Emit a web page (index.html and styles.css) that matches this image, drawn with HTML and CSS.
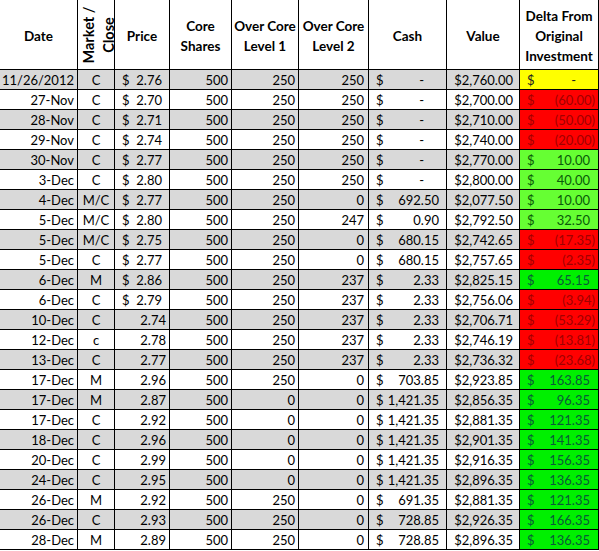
FILE: index.html
```html
<!DOCTYPE html>
<html lang="en">
<head>
<meta charset="utf-8">
<title>Investment tracker</title>
<link rel="stylesheet" href="styles.css">
</head>
<body>
<table class="sheet">
  <colgroup>
    <col class="c-date"><col class="c-mkt"><col class="c-price"><col class="c-core"><col class="c-l1"><col class="c-l2"><col class="c-cash"><col class="c-value"><col class="c-delta">
  </colgroup>
  <thead>
    <tr>
      <th><div class="hd">Date</div></th>
      <th><div class="hd hd-vert"><div class="vert">Market /<br>Close</div></div></th>
      <th><div class="hd">Price</div></th>
      <th><div class="hd">Core<br>Shares</div></th>
      <th><div class="hd">Over Core<br>Level 1</div></th>
      <th><div class="hd">Over Core<br>Level 2</div></th>
      <th><div class="hd">Cash</div></th>
      <th><div class="hd">Value</div></th>
      <th><div class="hd">Delta From<br>Original<br>Investment</div></th>
    </tr>
  </thead>
  <tbody>
    <tr class="alt"><td class="num">11/26/2012</td><td class="ctr">C</td><td class="acc"><span class="cur">$</span>2.76</td><td class="num">500</td><td class="num">250</td><td class="num l2">250</td><td class="acc"><span class="cur">$</span><span class="dash">-</span></td><td class="num val">$2,760.00</td><td class="acc yel"><span class="cur">$</span><span class="dash">-</span></td></tr>
    <tr><td class="num">27-Nov</td><td class="ctr">C</td><td class="acc"><span class="cur">$</span>2.70</td><td class="num">500</td><td class="num">250</td><td class="num l2">250</td><td class="acc"><span class="cur">$</span><span class="dash">-</span></td><td class="num val">$2,700.00</td><td class="acc red"><span class="cur">$</span>(60.00)</td></tr>
    <tr class="alt"><td class="num">28-Nov</td><td class="ctr">C</td><td class="acc"><span class="cur">$</span>2.71</td><td class="num">500</td><td class="num">250</td><td class="num l2">250</td><td class="acc"><span class="cur">$</span><span class="dash">-</span></td><td class="num val">$2,710.00</td><td class="acc red"><span class="cur">$</span>(50.00)</td></tr>
    <tr><td class="num">29-Nov</td><td class="ctr">C</td><td class="acc"><span class="cur">$</span>2.74</td><td class="num">500</td><td class="num">250</td><td class="num l2">250</td><td class="acc"><span class="cur">$</span><span class="dash">-</span></td><td class="num val">$2,740.00</td><td class="acc red"><span class="cur">$</span>(20.00)</td></tr>
    <tr class="alt"><td class="num">30-Nov</td><td class="ctr">C</td><td class="acc"><span class="cur">$</span>2.77</td><td class="num">500</td><td class="num">250</td><td class="num l2">250</td><td class="acc"><span class="cur">$</span><span class="dash">-</span></td><td class="num val">$2,770.00</td><td class="acc grn"><span class="cur">$</span>10.00</td></tr>
    <tr><td class="num">3-Dec</td><td class="ctr">C</td><td class="acc"><span class="cur">$</span>2.80</td><td class="num">500</td><td class="num">250</td><td class="num l2">250</td><td class="acc"><span class="cur">$</span><span class="dash">-</span></td><td class="num val">$2,800.00</td><td class="acc grn"><span class="cur">$</span>40.00</td></tr>
    <tr class="alt"><td class="num">4-Dec</td><td class="ctr">M/C</td><td class="acc"><span class="cur">$</span>2.77</td><td class="num">500</td><td class="num">250</td><td class="num l2">0</td><td class="acc"><span class="cur">$</span>692.50</td><td class="num val">$2,077.50</td><td class="acc grn"><span class="cur">$</span>10.00</td></tr>
    <tr><td class="num">5-Dec</td><td class="ctr">M/C</td><td class="acc"><span class="cur">$</span>2.80</td><td class="num">500</td><td class="num">250</td><td class="num l2">247</td><td class="acc"><span class="cur">$</span>0.90</td><td class="num val">$2,792.50</td><td class="acc grn"><span class="cur">$</span>32.50</td></tr>
    <tr class="alt"><td class="num">5-Dec</td><td class="ctr">M/C</td><td class="acc"><span class="cur">$</span>2.75</td><td class="num">500</td><td class="num">250</td><td class="num l2">0</td><td class="acc"><span class="cur">$</span>680.15</td><td class="num val">$2,742.65</td><td class="acc red"><span class="cur">$</span>(17.35)</td></tr>
    <tr><td class="num">5-Dec</td><td class="ctr">C</td><td class="acc"><span class="cur">$</span>2.77</td><td class="num">500</td><td class="num">250</td><td class="num l2">0</td><td class="acc"><span class="cur">$</span>680.15</td><td class="num val">$2,757.65</td><td class="acc red"><span class="cur">$</span>(2.35)</td></tr>
    <tr class="alt"><td class="num">6-Dec</td><td class="ctr">M</td><td class="acc"><span class="cur">$</span>2.86</td><td class="num">500</td><td class="num">250</td><td class="num l2">237</td><td class="acc"><span class="cur">$</span>2.33</td><td class="num val">$2,825.15</td><td class="acc grn2"><span class="cur">$</span>65.15</td></tr>
    <tr><td class="num">6-Dec</td><td class="ctr">C</td><td class="acc"><span class="cur">$</span>2.79</td><td class="num">500</td><td class="num">250</td><td class="num l2">237</td><td class="acc"><span class="cur">$</span>2.33</td><td class="num val">$2,756.06</td><td class="acc red"><span class="cur">$</span>(3.94)</td></tr>
    <tr class="alt"><td class="num">10-Dec</td><td class="ctr">C</td><td class="num">2.74</td><td class="num">500</td><td class="num">250</td><td class="num l2">237</td><td class="acc"><span class="cur">$</span>2.33</td><td class="num val">$2,706.71</td><td class="acc red"><span class="cur">$</span>(53.29)</td></tr>
    <tr><td class="num">12-Dec</td><td class="ctr">c</td><td class="num">2.78</td><td class="num">500</td><td class="num">250</td><td class="num l2">237</td><td class="acc"><span class="cur">$</span>2.33</td><td class="num val">$2,746.19</td><td class="acc red"><span class="cur">$</span>(13.81)</td></tr>
    <tr class="alt"><td class="num">13-Dec</td><td class="ctr">C</td><td class="num">2.77</td><td class="num">500</td><td class="num">250</td><td class="num l2">237</td><td class="acc"><span class="cur">$</span>2.33</td><td class="num val">$2,736.32</td><td class="acc red"><span class="cur">$</span>(23.68)</td></tr>
    <tr><td class="num">17-Dec</td><td class="ctr">M</td><td class="num">2.96</td><td class="num">500</td><td class="num">250</td><td class="num l2">0</td><td class="acc"><span class="cur">$</span>703.85</td><td class="num val">$2,923.85</td><td class="acc grn2"><span class="cur">$</span>163.85</td></tr>
    <tr class="alt"><td class="num">17-Dec</td><td class="ctr">M</td><td class="num">2.87</td><td class="num">500</td><td class="num">0</td><td class="num l2">0</td><td class="acc"><span class="cur">$</span>1,421.35</td><td class="num val">$2,856.35</td><td class="acc grn2"><span class="cur">$</span>96.35</td></tr>
    <tr><td class="num">17-Dec</td><td class="ctr">C</td><td class="num">2.92</td><td class="num">500</td><td class="num">0</td><td class="num l2">0</td><td class="acc"><span class="cur">$</span>1,421.35</td><td class="num val">$2,881.35</td><td class="acc grn2"><span class="cur">$</span>121.35</td></tr>
    <tr class="alt"><td class="num">18-Dec</td><td class="ctr">C</td><td class="num">2.96</td><td class="num">500</td><td class="num">0</td><td class="num l2">0</td><td class="acc"><span class="cur">$</span>1,421.35</td><td class="num val">$2,901.35</td><td class="acc grn2"><span class="cur">$</span>141.35</td></tr>
    <tr><td class="num">20-Dec</td><td class="ctr">C</td><td class="num">2.99</td><td class="num">500</td><td class="num">0</td><td class="num l2">0</td><td class="acc"><span class="cur">$</span>1,421.35</td><td class="num val">$2,916.35</td><td class="acc grn2"><span class="cur">$</span>156.35</td></tr>
    <tr class="alt"><td class="num">24-Dec</td><td class="ctr">C</td><td class="num">2.95</td><td class="num">500</td><td class="num">0</td><td class="num l2">0</td><td class="acc"><span class="cur">$</span>1,421.35</td><td class="num val">$2,896.35</td><td class="acc grn2"><span class="cur">$</span>136.35</td></tr>
    <tr><td class="num">26-Dec</td><td class="ctr">M</td><td class="num">2.92</td><td class="num">500</td><td class="num">250</td><td class="num l2">0</td><td class="acc"><span class="cur">$</span>691.35</td><td class="num val">$2,881.35</td><td class="acc grn2"><span class="cur">$</span>121.35</td></tr>
    <tr class="alt"><td class="num">26-Dec</td><td class="ctr">C</td><td class="num">2.93</td><td class="num">500</td><td class="num">250</td><td class="num l2">0</td><td class="acc"><span class="cur">$</span>728.85</td><td class="num val">$2,926.35</td><td class="acc grn2"><span class="cur">$</span>166.35</td></tr>
    <tr><td class="num">28-Dec</td><td class="ctr">M</td><td class="num">2.89</td><td class="num">500</td><td class="num">250</td><td class="num l2">0</td><td class="acc"><span class="cur">$</span>728.85</td><td class="num val">$2,896.35</td><td class="acc grn2"><span class="cur">$</span>136.35</td></tr>
  </tbody>
</table>
</body>
</html>
```

FILE: styles.css
```css
html, body {
  margin: 0;
  padding: 0;
  background: #fff;
}

body {
  font-family: Lato, "Liberation Sans", sans-serif;
  font-size: 13px;
  color: #000;
}

.sheet {
  border-spacing: 0;
  border-collapse: separate;
  table-layout: fixed;
  width: 599px;
}

.c-date { width: 78px; }
.c-mkt { width: 37px; }
.c-price { width: 55px; }
.c-core { width: 62px; }
.c-l1 { width: 67px; }
.c-l2 { width: 70px; }
.c-cash { width: 78px; }
.c-value { width: 73px; }
.c-delta { width: 79px; }

th, td {
  padding: 0;
  border-right: 1px solid #000;
  border-bottom: 1px solid #000;
  white-space: nowrap;
  overflow: hidden;
}

th {
  font-weight: bold;
  background: #fff;
  vertical-align: middle;
}

.hd {
  height: 69px;
  box-sizing: border-box;
  padding-top: 3px;
  display: flex;
  align-items: center;
  justify-content: center;
  text-align: center;
  line-height: 20px;
  font-size: 13.5px;
}

.hd-vert {
  padding-top: 0;
}

.vert {
  flex: none;
  white-space: nowrap;
  text-align: center;
  line-height: 20px;
  font-size: 14.5px;
  transform: translateX(2px) rotate(-90deg);
}

td {
  line-height: 17px;
  padding-top: 2px;
}

tr.alt td {
  background: #d9d9d9;
}

.num {
  text-align: right;
  padding-right: 3px;
}

.num.l2 {
  padding-right: 4px;
}

.num.val {
  padding-right: 6px;
}

.ctr {
  text-align: center;
}

.acc {
  text-align: right;
  padding-left: 7px;
  padding-right: 7px;
}

.cur {
  float: left;
}

.dash {
  padding-right: 15px;
}

tr td.yel {
  background: #ffff00;
  color: #222;
}

tr td.red {
  background: #ff0000;
  color: #a00000;
  padding-right: 3px;
}

tr td.grn {
  background: #66ff33;
  color: #0a5a0a;
  padding-right: 8px;
}

tr td.grn2 {
  background: #00f000;
  color: #0a5a3a;
  padding-right: 8px;
}
```
